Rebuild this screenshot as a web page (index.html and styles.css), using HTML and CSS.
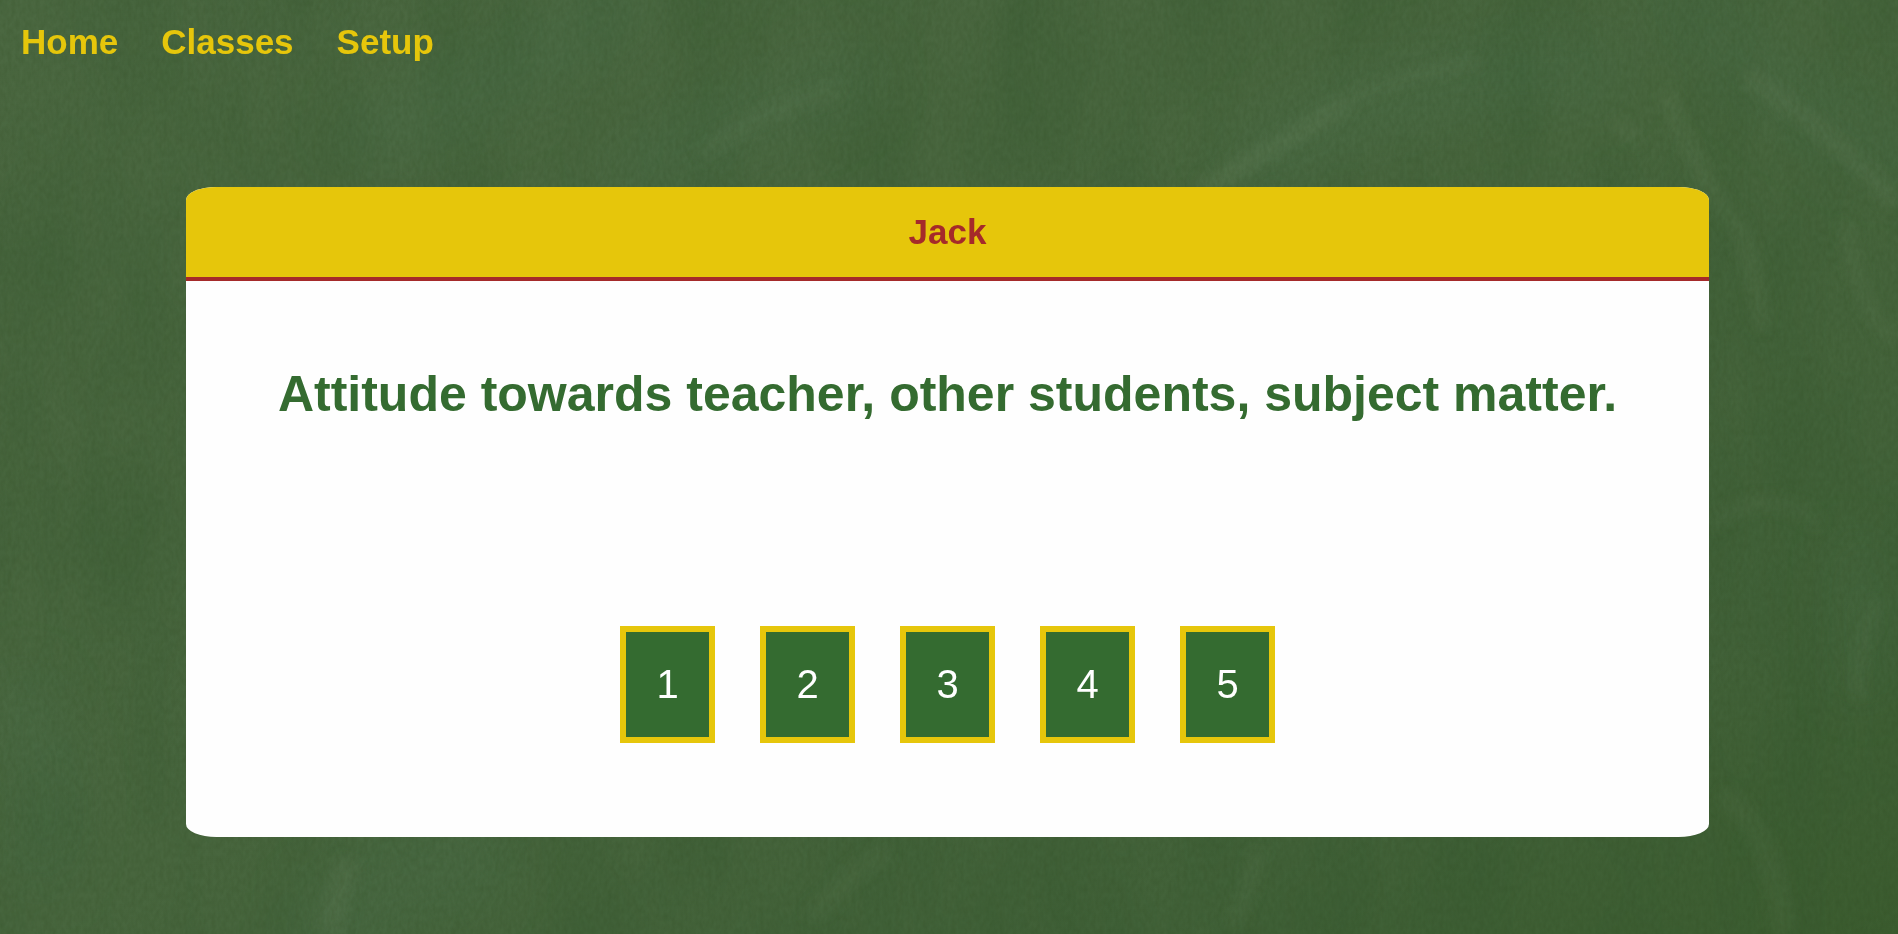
FILE: index.html
```html
<!DOCTYPE html>
<html lang="en">
<head>
<meta charset="utf-8">
<meta name="viewport" content="width=device-width, initial-scale=1">
<title>Jack</title>
<link rel="stylesheet" href="styles.css">
</head>
<body>
<svg class="board" viewBox="0 0 1898 934" preserveAspectRatio="none" aria-hidden="true">
  <defs>
    <linearGradient id="base" x1="0" y1="0" x2="1" y2="1">
      <stop offset="0" stop-color="#4b6841"/>
      <stop offset="0.5" stop-color="#48663e"/>
      <stop offset="0.8" stop-color="#426239"/>
      <stop offset="1" stop-color="#3b5c2f"/>
    </linearGradient>
    <filter id="soft" x="-30%" y="-30%" width="160%" height="160%"><feGaussianBlur stdDeviation="7"/></filter>
    <filter id="wide" x="-50%" y="-50%" width="200%" height="200%"><feGaussianBlur stdDeviation="28"/></filter>
    <filter id="smudge" x="0" y="0" width="100%" height="100%" color-interpolation-filters="sRGB">
      <feTurbulence type="fractalNoise" baseFrequency="0.012 0.005" numOctaves="3" seed="9"/>
      <feColorMatrix values="0 0 0 0 0.2  0 0 0 0 0.34  0 0 0 0 0.18  0.6 0 0 0 -0.2"/>
    </filter>
    <filter id="grain" x="0" y="0" width="100%" height="100%" color-interpolation-filters="sRGB">
      <feTurbulence type="fractalNoise" baseFrequency="0.25 0.14" numOctaves="2" seed="4"/>
      <feColorMatrix values="0 0 0 0 0.16  0 0 0 0 0.26  0 0 0 0 0.1  0.3 0 0 0 -0.09"/>
    </filter>
  </defs>
  <rect width="1898" height="934" fill="url(#base)"/>
  <rect width="1898" height="934" filter="url(#smudge)"/>
  <g fill="none" stroke="#4b7150" stroke-linecap="round" filter="url(#wide)" opacity="0.28">
    <path stroke-width="70" d="M380 130Q520 80 620 0"/>
    <path stroke-width="60" d="M640 170Q760 110 850 80"/>
    <path stroke-width="70" d="M1260 160Q1400 70 1590 70"/>
    <path stroke-width="60" d="M1680 0Q1800 120 1898 150"/>
    <path stroke-width="80" d="M330 930Q380 870 470 860"/>
    <path stroke-width="40" d="M1860 560Q1870 640 1860 680"/>
    <path stroke-width="60" d="M20 700Q60 780 40 860"/>
  </g>
  <g fill="none" stroke="#6b8560" stroke-linecap="butt" filter="url(#soft)" opacity="0.28">
    <path stroke-width="18" d="M1200 190Q1270 150 1345 105"/>
    <path stroke-width="10" d="M1320 112Q1410 70 1480 62" opacity="0.8"/>
    <path stroke-width="20" d="M700 155Q760 110 840 88" opacity="0.55"/>
    <path stroke-width="16" d="M1665 90Q1690 165 1740 230Q1758 280 1763 330" opacity="0.75"/>
    <path stroke-width="18" d="M1745 75Q1820 120 1898 205" opacity="0.8"/>
    <path stroke-width="14" d="M1845 220Q1865 330 1898 340" opacity="0.7"/>
    <path stroke-width="14" d="M1614 120L1640 142" opacity="0.9"/>
    <path stroke-width="24" d="M330 934Q335 900 350 860" opacity="0.8"/>
    <path stroke-width="20" d="M810 920Q850 870 890 850" opacity="0.5"/>
    <path stroke-width="16" d="M1235 925L1260 850" opacity="0.6"/>
    <path stroke-width="22" d="M1720 795Q1770 820 1785 934" opacity="0.5"/>
    <path stroke-width="16" d="M1710 525Q1770 480 1820 525" opacity="0.5"/>
    <path stroke-width="14" d="M1880 600Q1850 660 1860 700" opacity="0.6"/>
  </g>
  <rect width="1898" height="934" filter="url(#grain)"/>
</svg>

<nav class="nav" aria-label="Main">
  <a class="nav-link" href="#home">Home</a>
  <a class="nav-link" href="#classes">Classes</a>
  <a class="nav-link" href="#setup">Setup</a>
</nav>

<main class="card">
  <h1 class="card-title">Jack</h1>
  <div class="card-body">
    <h2 class="question">Attitude towards teacher, other students, subject matter.</h2>
    <div class="scores" role="group" aria-label="Score">
      <button class="score" type="button">1</button>
      <button class="score" type="button">2</button>
      <button class="score" type="button">3</button>
      <button class="score" type="button">4</button>
      <button class="score" type="button">5</button>
    </div>
  </div>
</main>
</body>
</html>
```
FILE: styles.css
```css
* {
  box-sizing: border-box;
}

body {
  margin: 0;
  background: #45633c;
  font-family: "Liberation Sans", Arial, sans-serif;
}

.board {
  position: fixed;
  inset: 0;
  z-index: -1;
  width: 100%;
  height: 100%;
}

.nav {
  display: flex;
  flex-wrap: wrap;
  gap: 0 43px;
  padding: 22px 21px;
}

.nav-link {
  color: #e6c60b;
  font-size: 35px;
  font-weight: bold;
  line-height: 40px;
  text-decoration: none;
}

.card {
  margin: 103px 189px 40px 186px;
  overflow: hidden;
  border-radius: 2%;
  background: #fefefe;
  text-align: center;
}

.card-title {
  margin: 0;
  padding: 25px 20px;
  border-bottom: 4px solid #a52a2a;
  background: #e6c60b;
  color: #a52a2a;
  font-size: 35px;
  line-height: 40px;
}

.card-body {
  padding: 84px 40px 94px;
}

.question {
  margin: 0;
  color: #346b30;
  font-size: 50px;
  line-height: 58px;
}

.scores {
  display: flex;
  flex-wrap: wrap;
  justify-content: center;
  gap: 45px;
  margin-top: 203px;
}

.score {
  width: 95px;
  height: 117px;
  padding: 0;
  border: 6px solid #e6c60b;
  background: #346b30;
  color: #fff;
  font-family: inherit;
  font-size: 40px;
}
```
